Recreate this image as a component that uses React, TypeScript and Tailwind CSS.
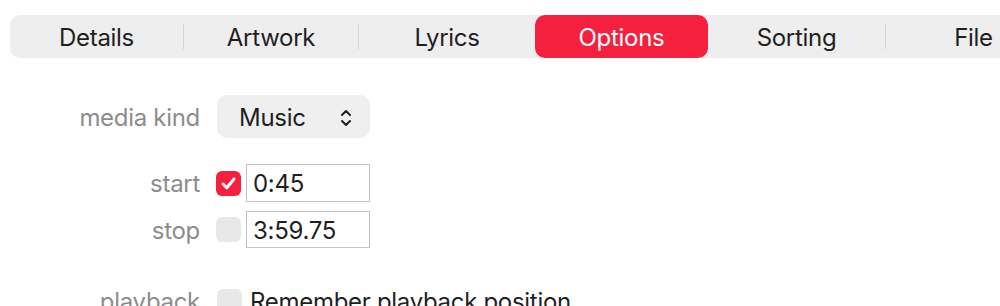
import React from "react";

const font = { fontFamily: "Inter, 'Liberation Sans', sans-serif" };

function Check({ checked }: { checked: boolean }) {
  return checked ? (
    <div className="w-[25px] h-[25px] rounded-[6px] bg-[#f5203e] flex items-center justify-center">
      <svg width="19" height="19" viewBox="0 0 19 19" fill="none">
        <path d="M4 10 L7.8 13.8 L15 5" stroke="white" strokeWidth="3" strokeLinecap="round" strokeLinejoin="round" />
      </svg>
    </div>
  ) : (
    <div className="w-[25px] h-[25px] rounded-[6px] bg-[#e8e8e8]" />
  );
}

function Seg({ label, w, active }: { label: string; w: string; active?: boolean }) {
  return (
    <div
      className={`${w} shrink-0 h-full flex items-center justify-center pt-[2px] text-[24px] tracking-[-0.3px] ${
        active ? "bg-[#f5203e] text-white rounded-[10px]" : "text-[#1f1f1f]"
      }`}
    >
      {label}
    </div>
  );
}

function Sep() {
  return (
    <div className="w-[1px] shrink-0 h-full flex items-center">
      <div className="w-[1px] h-[25px] bg-[#d4d4d4]" />
    </div>
  );
}

export default function App() {
  return (
    <div className="w-[1000px] h-[306px] overflow-hidden bg-white tracking-[-0.3px]" style={font}>
      <div className="pt-[15px] pl-[10px]">
        <div className="flex h-[43px] w-[1080px] rounded-[10px] bg-[#eeeeee]">
          <Seg label="Details" w="w-[173px]" />
          <Sep />
          <Seg label="Artwork" w="w-[174px]" />
          <Sep />
          <Seg label="Lyrics" w="w-[176px]" />
          <Seg label="Options" w="w-[173px]" active />
          <Seg label="Sorting" w="w-[177px]" />
          <Sep />
          <Seg label="File" w="w-[175px]" />
        </div>
      </div>

      <div className="mt-[37px] flex flex-col">
        <div className="flex items-center h-[43px]">
          <div className="w-[200px] text-right text-[24px] text-[#8c8c8c] pt-[2px]">media kind</div>
          <div className="ml-[17px] w-[153px] h-[43px] rounded-[10px] bg-[#efefef] flex items-center justify-between pl-[22px] pr-[18px] pt-[2px] text-[24px] text-[#1f1f1f]">
            <span>Music</span>
            <svg width="12" height="20" viewBox="0 0 12 20" fill="none">
              <path d="M2 7 L6 3 L10 7" stroke="#1f1f1f" strokeWidth="2" strokeLinecap="round" strokeLinejoin="round" />
              <path d="M2 13 L6 17 L10 13" stroke="#1f1f1f" strokeWidth="2" strokeLinecap="round" strokeLinejoin="round" />
            </svg>
          </div>
        </div>

        <div className="flex items-center h-[38px] mt-[26px]">
          <div className="w-[200px] text-right text-[24px] text-[#8c8c8c] pt-[2px]">start</div>
          <div className="ml-[16px]">
            <Check checked />
          </div>
          <div className="ml-[5px] w-[124px] h-[38px] border-[1.5px] border-[#c2c2c2] flex items-center pl-[6px] pt-[2px] text-[24px] text-[#1f1f1f]">
            0:45
          </div>
        </div>

        <div className="flex items-center h-[37px] mt-[9px]">
          <div className="w-[200px] text-right text-[24px] text-[#8c8c8c] pt-[2px]">stop</div>
          <div className="ml-[16px]">
            <Check checked={false} />
          </div>
          <div className="ml-[5px] w-[124px] h-[37px] border-[1.5px] border-[#c2c2c2] flex items-center pl-[6px] pt-[2px] text-[24px] text-[#1f1f1f]">
            3:59.75
          </div>
        </div>

        <div className="flex items-center h-[38px] mt-[34px]">
          <div className="w-[200px] text-right text-[24px] text-[#8c8c8c] pt-[2px]">playback</div>
          <div className="ml-[17px]">
            <Check checked={false} />
          </div>
          <div className="ml-[8px] pt-[2px] text-[24px] text-[#1f1f1f]">Remember playback position</div>
        </div>
      </div>
    </div>
  );
}
